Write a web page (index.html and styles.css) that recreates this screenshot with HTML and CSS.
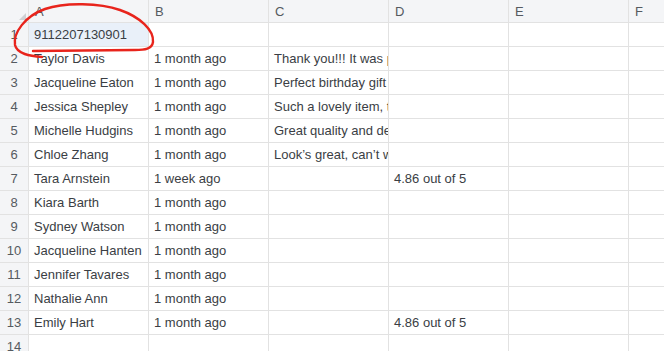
FILE: index.html
```html
<!DOCTYPE html>
<html lang="en">
  <head>
    <meta charset="UTF-8" />
    <title>Sheet</title>
    <link rel="stylesheet" href="styles.css">
  </head>
  <body>
    <div class="sheet">
      <div class="grid">
        <div class="corner"><span class="corner-mark"></span></div>
        <div class="col-head">A</div>
        <div class="col-head">B</div>
        <div class="col-head">C</div>
        <div class="col-head">D</div>
        <div class="col-head">E</div>
        <div class="col-head">F</div>

        <div class="row-head">1</div>
        <div class="cell selected">9112207130901</div>
        <div class="cell"></div><div class="cell"></div><div class="cell"></div><div class="cell"></div><div class="cell"></div>

        <div class="row-head">2</div>
        <div class="cell">Taylor Davis</div>
        <div class="cell">1 month ago</div>
        <div class="cell">Thank you!!! It was perfect</div>
        <div class="cell"></div><div class="cell"></div><div class="cell"></div>

        <div class="row-head">3</div>
        <div class="cell">Jacqueline Eaton</div>
        <div class="cell">1 month ago</div>
        <div class="cell">Perfect birthday gift</div>
        <div class="cell"></div><div class="cell"></div><div class="cell"></div>

        <div class="row-head">4</div>
        <div class="cell">Jessica Shepley</div>
        <div class="cell">1 month ago</div>
        <div class="cell">Such a lovely item, thanks</div>
        <div class="cell"></div><div class="cell"></div><div class="cell"></div>

        <div class="row-head">5</div>
        <div class="cell">Michelle Hudgins</div>
        <div class="cell">1 month ago</div>
        <div class="cell">Great quality and design</div>
        <div class="cell"></div><div class="cell"></div><div class="cell"></div>

        <div class="row-head">6</div>
        <div class="cell">Chloe Zhang</div>
        <div class="cell">1 month ago</div>
        <div class="cell">Look’s great, can’t wait</div>
        <div class="cell"></div><div class="cell"></div><div class="cell"></div>

        <div class="row-head">7</div>
        <div class="cell">Tara Arnstein</div>
        <div class="cell">1 week ago</div>
        <div class="cell"></div>
        <div class="cell">4.86 out of 5</div>
        <div class="cell"></div><div class="cell"></div>

        <div class="row-head">8</div>
        <div class="cell">Kiara Barth</div>
        <div class="cell">1 month ago</div>
        <div class="cell"></div><div class="cell"></div><div class="cell"></div><div class="cell"></div>

        <div class="row-head">9</div>
        <div class="cell">Sydney Watson</div>
        <div class="cell">1 month ago</div>
        <div class="cell"></div><div class="cell"></div><div class="cell"></div><div class="cell"></div>

        <div class="row-head">10</div>
        <div class="cell">Jacqueline Hanten</div>
        <div class="cell">1 month ago</div>
        <div class="cell"></div><div class="cell"></div><div class="cell"></div><div class="cell"></div>

        <div class="row-head">11</div>
        <div class="cell">Jennifer Tavares</div>
        <div class="cell">1 month ago</div>
        <div class="cell"></div><div class="cell"></div><div class="cell"></div><div class="cell"></div>

        <div class="row-head">12</div>
        <div class="cell">Nathalie Ann</div>
        <div class="cell">1 month ago</div>
        <div class="cell"></div><div class="cell"></div><div class="cell"></div><div class="cell"></div>

        <div class="row-head">13</div>
        <div class="cell">Emily Hart</div>
        <div class="cell">1 month ago</div>
        <div class="cell"></div>
        <div class="cell">4.86 out of 5</div>
        <div class="cell"></div><div class="cell"></div>

        <div class="row-head">14</div>
        <div class="cell"></div><div class="cell"></div><div class="cell"></div><div class="cell"></div><div class="cell"></div><div class="cell"></div>
      </div>

      <!-- hand-drawn red circle around A1 -->
      <svg class="scribble" width="170" height="64" viewBox="0 0 170 64">
        <path d="M42,57 C30,56 17,54 15,45 C13,33 25,16 45,9 C65,2 100,3 120,10 C140,17 154,30 153,42 C152,49 145,50 135,50 L33,51"
              fill="none" stroke="#e8241c" stroke-width="2.4" stroke-linecap="round" stroke-linejoin="round" />
      </svg>
    </div>
  </body>
</html>
```

FILE: styles.css
```css
body {
  margin: 0;
  background: #ffffff;
  font-family: "Liberation Sans", Arial, sans-serif;
  font-size: 13px;
  color: #3a3e44;
  overflow: hidden;
}

.sheet {
  position: relative;
  width: 664px;
  height: 351px;
  overflow: hidden;
}

.grid {
  display: grid;
  grid-template-columns: 29px repeat(5, 120px) 60px;
  grid-auto-rows: 24px;
  grid-template-rows: 23px;
}

.grid > div {
  box-sizing: border-box;
  border-right: 1px solid #e2e2e2;
  border-bottom: 1px solid #e2e2e2;
  white-space: nowrap;
  overflow: hidden;
  display: flex;
  align-items: center;
}

.corner {
  position: relative;
  background: #f4f5f7;
}

.corner-mark {
  position: absolute;
  right: 2px;
  bottom: 2px;
  width: 0;
  height: 0;
  border-left: 7px solid transparent;
  border-bottom: 7px solid #cfd1d4;
}

.col-head {
  background: #f4f5f7;
  color: #555a60;
  padding-left: 6px;
}

.row-head {
  background: #f4f5f7;
  color: #555a60;
  justify-content: center;
}

.cell {
  padding-left: 5px;
}

.cell.selected {
  background: #e9f0f9;
}

.scribble {
  position: absolute;
  left: 0;
  top: 0;
}
```
